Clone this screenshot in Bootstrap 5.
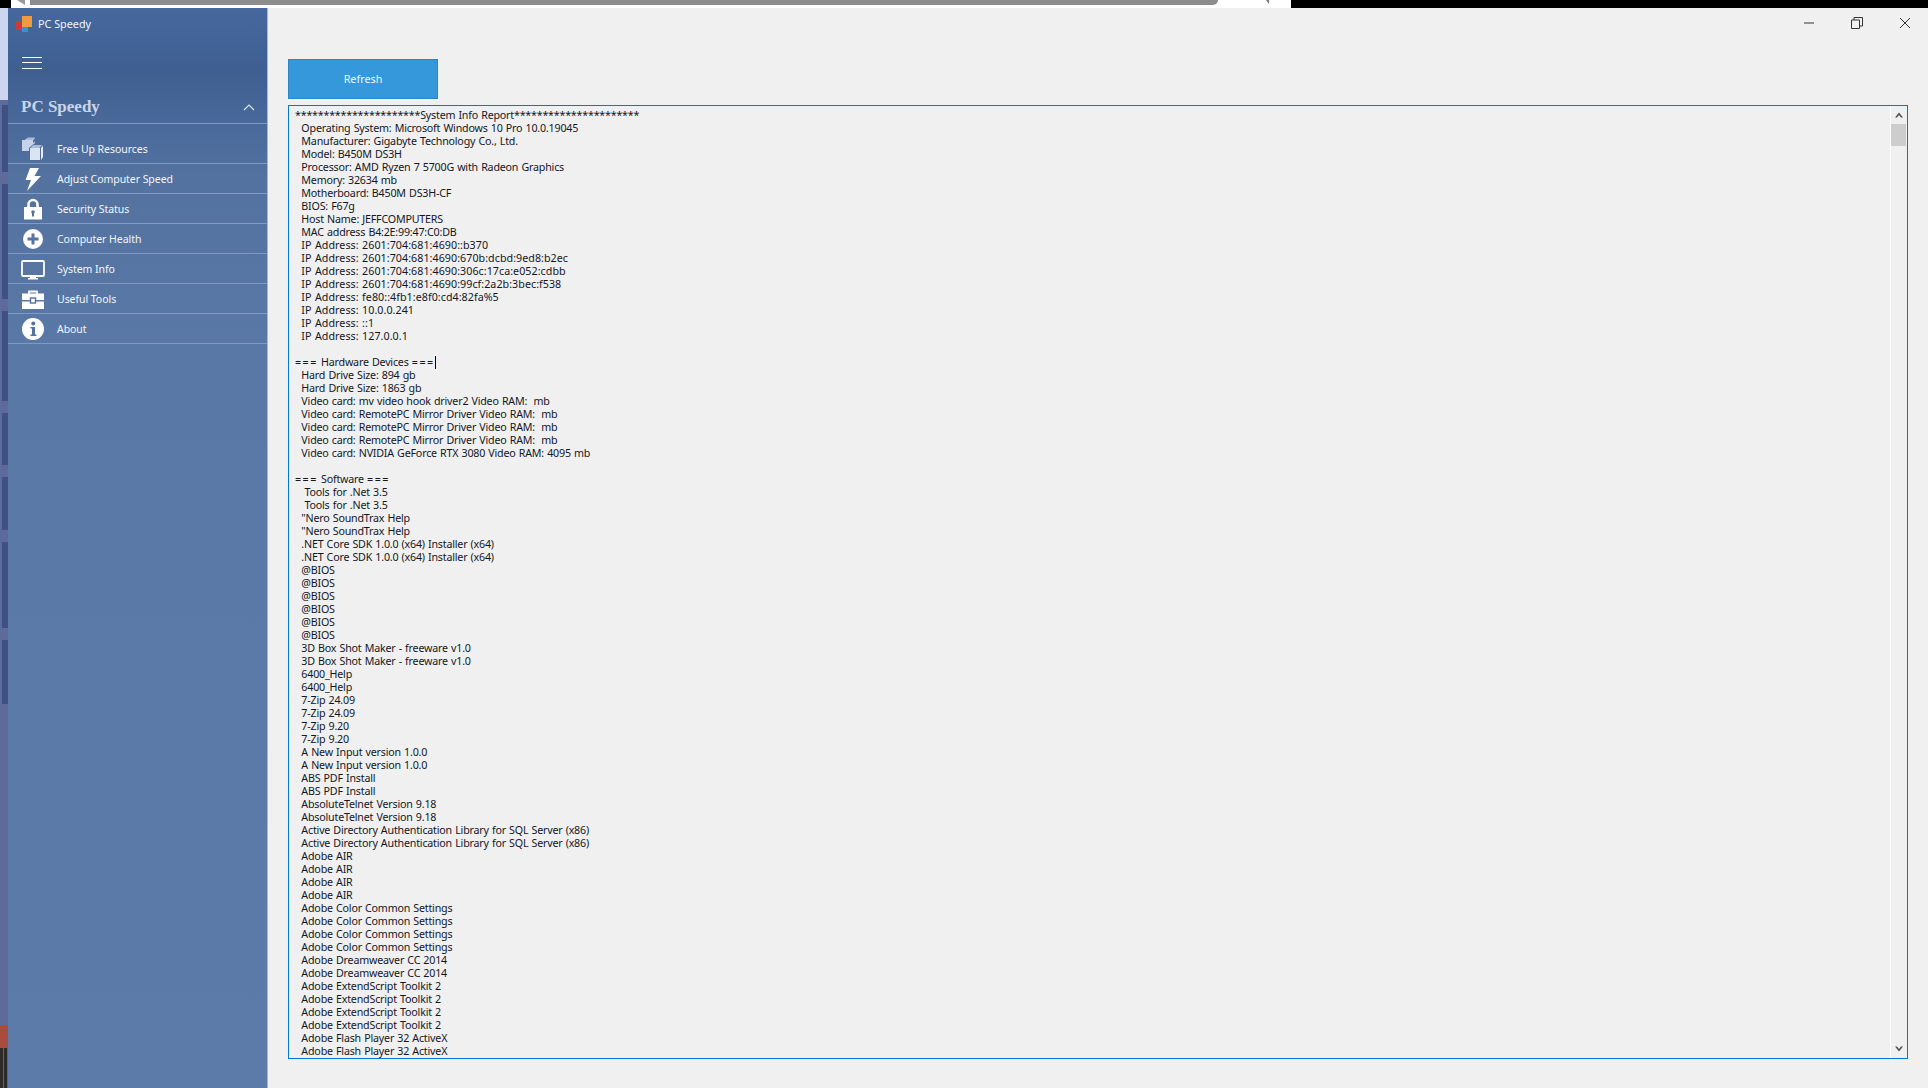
<!DOCTYPE html>
<html lang="en">
<head>
<meta charset="utf-8">
<title>PC Speedy</title>
<link href="https://cdn.jsdelivr.net/npm/bootstrap@5.3.0/dist/css/bootstrap.min.css" rel="stylesheet">
<style>
html,body{height:100%;margin:0;overflow:hidden;background:#f0f0f0}
body{font-family:"Noto Sans","Liberation Sans",sans-serif}
.top-strip{height:8px;background:#000}
.strip-white{width:1280px;margin-left:11px;background:#fff;position:relative}
.strip-arrow-l{width:0;height:0;border-top:5px solid #999;border-left:8px solid transparent;margin:0 0 0 6px}
.strip-thumb{width:1188px;height:5px;background:#8c8c8c;border-radius:0 0 5px 0;margin-left:5px}
.strip-arrow-r{width:0;height:0;border-top:4px solid #777;border-left:3px solid transparent;margin-left:48px}
.app-frame{height:1080px}
.edge{width:8px;background:#5d6a9b}
.edge-light{height:92px;background:#cdd6ef}
.edge-gap{height:5px}
.edge-bar{margin-left:2px;margin-bottom:12px;background:#3f5083}
.edge-fill{flex:1}
.edge-red{height:23px;background:#a84c40}
.edge-dark{height:40px;background:repeating-linear-gradient(90deg,#2d2a28 0,#2d2a28 3px,#6b655c 3px,#6b655c 4px)}
.side-panel{width:260px;background:linear-gradient(180deg,#46689e 0,#3f5f91 62px,#49699b 115px,#53729f 170px,#5a78a6 330px,#5d7ba8 100%);border-right:1px solid #a3b8d8;color:#fff}
.app-title{height:32px;padding-left:8px;gap:6px;font-size:10.8px;color:#f2f5fa}
.logo-mark{width:16px;height:16px;flex:none}
.burger{height:40px;padding-left:14px;padding-top:5px}
.burger-lines{width:20px;height:12px;border-top:1px solid #fff;border-bottom:1px solid #fff;position:relative}
.burger-lines::after{content:"";position:absolute;left:0;right:0;top:4px;border-top:1px solid #fff}
.section-head{height:44px;padding:10px 12px 0 13px;border-bottom:1px solid #7f9ac4;font-family:"Liberation Serif",serif;font-weight:700;font-size:17px;color:#c9d5e8}
.section-head svg{width:12px;height:8px}
.side-item{height:30px;border-bottom:1px solid #7f9ac4;font-size:10.5px;letter-spacing:-.05px;color:#f3f6fb;padding-top:1px}
.side-item.first-item{height:40px;padding-top:11px}
.item-label{padding-top:2px}
.icon-slot{width:49px;flex:none;display:flex;justify-content:center}
.icon-slot svg{width:24px;height:24px;margin-left:1px}
.work-area{padding:0 20px 29px 20px;min-width:0}
.window-bar{height:51px;margin-right:-21px}
.win-btn{width:48px;height:30px}
.win-btn svg{width:12px;height:12px}
.btn-refresh{width:150px;height:40px;background:#3498db;border:1px solid #2d86c4;border-radius:0;color:#f1f7fc;font-size:10.8px;padding:1px 0 0;margin-bottom:6px}
.btn-refresh:hover{background:#3498db;border-color:#2d86c4;color:#f1f7fc}
.report-box{border:1px solid #0078d7;background:#f0f0f0;min-height:0;overflow:hidden}
.report-text{flex:1;margin:0;padding:3px 0 0 6px;font-size:10.7px;letter-spacing:-.2px;word-spacing:.6px;line-height:13px;white-space:pre;overflow:hidden;color:#14171f;font-family:"Noto Sans","Liberation Sans",sans-serif}
.addr-line{letter-spacing:.05px}
.eq-run{letter-spacing:1.5px}
.caret-mark{display:inline-block;width:1px;height:13px;background:#000;vertical-align:top}
.scroll-rail{width:17px;flex:none;border-left:1px solid #fff;padding:0 1px 0 0}
.scroll-btn{height:18px;flex:none}
.scroll-btn svg{width:8px;height:6px}
.scroll-thumb{height:22px;background:#cdcdcd}
</style>
</head>
<body class="d-flex flex-column">
<div class="top-strip d-flex flex-none overflow-hidden">
  <div class="strip-white d-flex align-items-start">
    <div class="strip-arrow-l"></div>
    <div class="strip-thumb"></div>
    <div class="strip-arrow-r"></div>
  </div>
</div>
<div class="app-frame d-flex">
  <div class="edge d-flex flex-column">
    <div class="edge-light"></div>
    <div class="edge-gap"></div>
    <div class="edge-bar" style="height:67px"></div>
    <div class="edge-bar" style="height:115px"></div>
    <div class="edge-bar" style="height:90px"></div>
    <div class="edge-bar" style="height:52px"></div>
    <div class="edge-bar" style="height:53px"></div>
    <div class="edge-bar" style="height:86px"></div>
    <div class="edge-bar" style="height:64px"></div>
    <div class="edge-fill"></div>
    <div class="edge-red"></div>
    <div class="edge-dark"></div>
  </div>
  <nav class="side-panel d-flex flex-column flex-shrink-0">
    <div class="app-title d-flex align-items-center">
      <svg class="logo-mark" viewBox="0 0 16 16"><rect x="0" y="5" width="6" height="9" fill="#d6343f"/><rect x="6" y="11" width="6" height="5" fill="#3f8fd8"/><rect x="6" y="0" width="10" height="11" fill="#f29a3f"/></svg>
      <span>PC Speedy</span>
    </div>
    <div class="burger d-flex align-items-center"><div class="burger-lines"></div></div>
    <div class="section-head d-flex align-items-center justify-content-between">
      <span>PC Speedy</span>
      <svg viewBox="0 0 12 8"><path d="M1 7 6 2l5 5" fill="none" stroke="#dfe7f3" stroke-width="1.1"/></svg>
    </div>
    <div class="side-item first-item d-flex align-items-center">
      <span class="icon-slot"><svg viewBox="0 0 24 24"><path d="M4 2.5 7 0.5h7l-1 2.5H4z" fill="#a9bbd8"/><path d="M1 3h11v4.5L8 11v3H1z" fill="#c6d3e8"/><path d="M12 6.5 13.5 4v3.5z" fill="#e6edf6"/><path d="M12 8h9l-2.5 3H9.500z" fill="#a9bbd8"/><path d="M9 11h10v12H9z" fill="#dbe4f1"/><path d="M20 11l2-2.500V20l-2 3z" fill="#e9eff7"/></svg></span>
      <span class="item-label">Free Up Resources</span>
    </div>
    <div class="side-item d-flex align-items-center">
      <span class="icon-slot"><svg viewBox="0 0 24 24"><path d="M9 1h9l-4.500 8H20L6 24l4-11H4.500z" fill="#fff"/></svg></span>
      <span class="item-label">Adjust Computer Speed</span>
    </div>
    <div class="side-item d-flex align-items-center">
      <span class="icon-slot"><svg viewBox="0 0 24 24"><path d="M7.500 11V7.500a4.500 4.500 0 0 1 9 0V11" fill="none" stroke="#fff" stroke-width="2.600"/><rect x="3" y="10" width="18" height="12.500" fill="#fff"/><circle cx="12" cy="15" r="1.800" fill="#55739f"/><rect x="11" y="15" width="2" height="4.500" fill="#55739f"/></svg></span>
      <span class="item-label">Security Status</span>
    </div>
    <div class="side-item d-flex align-items-center">
      <span class="icon-slot"><svg viewBox="0 0 24 24"><circle cx="12" cy="12" r="10" fill="#fff"/><path d="M12 6.500v11M6.500 12h11" stroke="#56749f" stroke-width="3"/></svg></span>
      <span class="item-label">Computer Health</span>
    </div>
    <div class="side-item d-flex align-items-center">
      <span class="icon-slot"><svg viewBox="0 0 24 24"><path d="M2 4h20a1 1 0 0 1 1 1v13a1 1 0 0 1-1 1H2a1 1 0 0 1-1-1V5a1 1 0 0 1 1-1z" fill="none" stroke="#fff" stroke-width="1.800"/><rect x="9" y="19" width="6" height="2" fill="#fff"/><rect x="7" y="21" width="10" height="1.500" fill="#fff"/></svg></span>
      <span class="item-label">System Info</span>
    </div>
    <div class="side-item d-flex align-items-center">
      <span class="icon-slot"><svg viewBox="0 0 24 24"><path d="M8 7V4.500h8V7" fill="none" stroke="#fff" stroke-width="1.800"/><rect x="1" y="6.500" width="22" height="6.500" fill="#fff"/><rect x="1" y="14.500" width="22" height="7.500" fill="#fff"/><rect x="9.500" y="11" width="5" height="5" fill="#fff" stroke="#56749f" stroke-width="1.400"/></svg></span>
      <span class="item-label">Useful Tools</span>
    </div>
    <div class="side-item d-flex align-items-center">
      <span class="icon-slot"><svg viewBox="0 0 24 24"><circle cx="12" cy="12" r="11" fill="#fff"/><circle cx="12.300" cy="6.500" r="2" fill="#55739f"/><path d="M9.500 10h4.500v7.500h1.500V19h-6v-1.500H11V11.500H9.500z" fill="#55739f"/></svg></span>
      <span class="item-label">About</span>
    </div>
  </nav>
  <main class="work-area flex-grow-1 d-flex flex-column">
    <div class="window-bar d-flex justify-content-end flex-shrink-0">
      <div class="win-btn d-flex align-items-center justify-content-center"><svg viewBox="0 0 12 12"><path d="M1 6h10" stroke="#333" stroke-width="1"/></svg></div>
      <div class="win-btn d-flex align-items-center justify-content-center"><svg viewBox="0 0 12 12"><path d="M.5 3h8v8.500h-8zM3 3V.5h8.500V9H8.500" fill="none" stroke="#333" stroke-width="1"/></svg></div>
      <div class="win-btn d-flex align-items-center justify-content-center"><svg viewBox="0 0 12 12"><path d="M1 1l10 10M11 1 1 11" stroke="#333" stroke-width="1"/></svg></div>
    </div>
    <button type="button" class="btn btn-refresh flex-shrink-0">Refresh</button>
    <div class="report-box flex-grow-1 d-flex">
      <div class="report-text">**********************System Info Report**********************
  Operating System: Microsoft Windows 10 Pro 10.0.19045
  Manufacturer: Gigabyte Technology Co., Ltd.
  Model: B450M DS3H
  Processor: AMD Ryzen 7 5700G with Radeon Graphics
  Memory: 32634 mb
  Motherboard: B450M DS3H-CF
  BIOS: F67g
  Host Name: JEFFCOMPUTERS
  MAC address B4:2E:99:47:C0:DB
  <span class="addr-line">IP Address: 2601:704:681:4690::b370</span>
  <span class="addr-line">IP Address: 2601:704:681:4690:670b:dcbd:9ed8:b2ec</span>
  <span class="addr-line">IP Address: 2601:704:681:4690:306c:17ca:e052:cdbb</span>
  <span class="addr-line">IP Address: 2601:704:681:4690:99cf:2a2b:3bec:f538</span>
  <span class="addr-line">IP Address: fe80::4fb1:e8f0:cd4:82fa%5</span>
  <span class="addr-line">IP Address: 10.0.0.241</span>
  <span class="addr-line">IP Address: ::1</span>
  <span class="addr-line">IP Address: 127.0.0.1</span>

<span class="eq-run">===</span> Hardware Devices <span class="eq-run">===</span><span class="caret-mark"></span>
  Hard Drive Size: 894 gb
  Hard Drive Size: 1863 gb
  Video card: mv video hook driver2 Video RAM:  mb
  Video card: RemotePC Mirror Driver Video RAM:  mb
  Video card: RemotePC Mirror Driver Video RAM:  mb
  Video card: RemotePC Mirror Driver Video RAM:  mb
  Video card: NVIDIA GeForce RTX 3080 Video RAM: 4095 mb

<span class="eq-run">===</span> Software <span class="eq-run">===</span>
   Tools for .Net 3.5
   Tools for .Net 3.5
  "Nero SoundTrax Help
  "Nero SoundTrax Help
  .NET Core SDK 1.0.0 (x64) Installer (x64)
  .NET Core SDK 1.0.0 (x64) Installer (x64)
  @BIOS
  @BIOS
  @BIOS
  @BIOS
  @BIOS
  @BIOS
  3D Box Shot Maker - freeware v1.0
  3D Box Shot Maker - freeware v1.0
  6400_Help
  6400_Help
  7-Zip 24.09
  7-Zip 24.09
  7-Zip 9.20
  7-Zip 9.20
  A New Input version 1.0.0
  A New Input version 1.0.0
  ABS PDF Install
  ABS PDF Install
  AbsoluteTelnet Version 9.18
  AbsoluteTelnet Version 9.18
  Active Directory Authentication Library for SQL Server (x86)
  Active Directory Authentication Library for SQL Server (x86)
  Adobe AIR
  Adobe AIR
  Adobe AIR
  Adobe AIR
  Adobe Color Common Settings
  Adobe Color Common Settings
  Adobe Color Common Settings
  Adobe Color Common Settings
  Adobe Dreamweaver CC 2014
  Adobe Dreamweaver CC 2014
  Adobe ExtendScript Toolkit 2
  Adobe ExtendScript Toolkit 2
  Adobe ExtendScript Toolkit 2
  Adobe ExtendScript Toolkit 2
  Adobe Flash Player 32 ActiveX
  Adobe Flash Player 32 ActiveX</div>
      <div class="scroll-rail d-flex flex-column">
        <div class="scroll-btn d-flex align-items-center justify-content-center"><svg viewBox="0 0 8 6"><path d="M0 5.500 4 .5l4 5H6L4 3 2 5.500z" fill="#505050"/></svg></div>
        <div class="scroll-thumb"></div>
        <div class="flex-grow-1"></div>
        <div class="scroll-btn d-flex align-items-center justify-content-center"><svg viewBox="0 0 8 6"><path d="M0 .5 4 5.500l4-5H6L4 3 2 .5z" fill="#505050"/></svg></div>
      </div>
    </div>
  </main>
</div>
<script src="https://cdn.jsdelivr.net/npm/bootstrap@5.3.0/dist/js/bootstrap.bundle.min.js"></script>
</body>
</html>
